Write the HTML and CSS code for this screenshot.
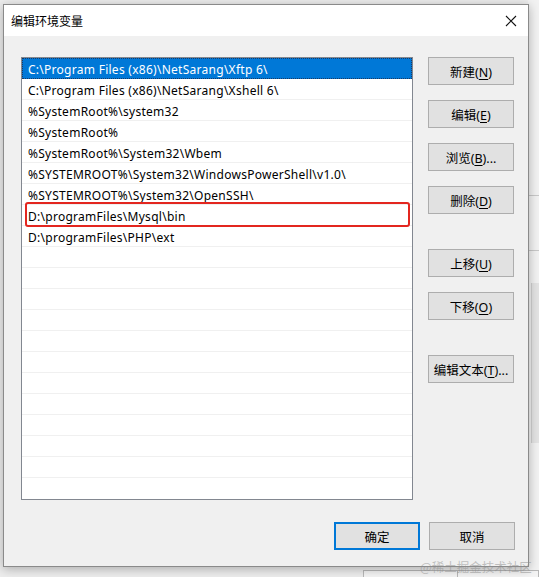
FILE: index.html
```html
<!DOCTYPE html>
<html lang="zh-CN">
<head>
<meta charset="utf-8">
<title>编辑环境变量</title>
<link rel="stylesheet" href="styles.css">
</head>
<body>
<div class="desktop">
  <div class="backdrop-right">
    <div class="bd-line l1"></div>
    <div class="bd-line l2"></div>
    <div class="bd-scroll"></div>
  </div>
  <div class="dialog">
    <div class="titlebar">
      <span class="title">编辑环境变量</span>
      <svg class="close" width="12" height="12" viewBox="0 0 12 12"><path d="M1 1 L11 11 M11 1 L1 11" stroke="#111" stroke-width="1.1" fill="none"/></svg>
    </div>
    <div class="body">
      <div class="main">
        <div class="listbox">
          <div class="row selected">C:\Program Files (x86)\NetSarang\Xftp 6\</div>
          <div class="row">C:\Program Files (x86)\NetSarang\Xshell 6\</div>
          <div class="row">%SystemRoot%\system32</div>
          <div class="row">%SystemRoot%</div>
          <div class="row">%SystemRoot%\System32\Wbem</div>
          <div class="row">%SYSTEMROOT%\System32\WindowsPowerShell\v1.0\</div>
          <div class="row">%SYSTEMROOT%\System32\OpenSSH\</div>
          <div class="row">D:\programFiles\Mysql\bin</div>
          <div class="row">D:\programFiles\PHP\ext</div>
          <div class="row"></div>
          <div class="row"></div>
          <div class="row"></div>
          <div class="row"></div>
          <div class="row"></div>
          <div class="row"></div>
          <div class="row"></div>
          <div class="row"></div>
          <div class="row"></div>
          <div class="row"></div>
          <div class="row"></div>
          <div class="row last"></div>
          <div class="highlight"></div>
        </div>
        <div class="side">
          <button class="btn">新建(<u>N</u>)</button>
          <button class="btn">编辑(<u>E</u>)</button>
          <button class="btn">浏览(<u>B</u>)...</button>
          <button class="btn">删除(<u>D</u>)</button>
          <button class="btn far">上移(<u>U</u>)</button>
          <button class="btn">下移(<u>O</u>)</button>
          <button class="btn far">编辑文本(<u>T</u>)...</button>
        </div>
      </div>
      <div class="footer">
        <button class="btn default">确定</button>
        <button class="btn">取消</button>
      </div>
    </div>
  </div>
  <div class="bottom-strip">
    <div class="bs-box b1"></div>
    <div class="bs-box b2"></div>
  </div>
  <span class="watermark">@稀土掘金技术社区</span>
</div>
</body>
</html>
```

FILE: styles.css
```css
html, body {
  margin: 0;
  padding: 0;
}
body {
  background: #f0f0f0;
  font-family: "Noto Sans", "Noto Sans CJK SC", sans-serif;
  font-size: 12px;
  color: #000;
}
.desktop {
  position: relative;
  width: 539px;
  height: 577px;
  overflow: hidden;
  background: #ededed;
}
.backdrop-right {
  position: absolute;
  left: 528px;
  top: 0;
  width: 11px;
  height: 577px;
  background: #f2f2f2;
}
.bd-line {
  position: absolute;
  left: 0;
  right: 0;
  height: 1px;
  background: #c8c8c8;
}
.l1 { top: 195px; }
.l2 { top: 250px; }
.bd-scroll {
  position: absolute;
  left: 3px;
  top: 283px;
  width: 8px;
  height: 160px;
  background: #e3e3e3;
  border-left: 1px solid #d0d0d0;
}
.dialog {
  position: relative;
  z-index: 1;
  margin: 4px 0 0 3px;
  width: 526px;
  height: 563px;
  box-sizing: border-box;
  border: 1px solid #8a8a8a;
  background: #f0f0f0;
  box-shadow: 0 2px 10px rgba(0, 0, 0, 0.28);
  display: flex;
  flex-direction: column;
}
.titlebar {
  height: 31px;
  flex: none;
  background: #fff;
  display: flex;
  align-items: center;
  justify-content: space-between;
  padding: 0 10px 0 7px;
}
.title {
  font-family: "Noto Sans CJK SC", sans-serif;
  font-size: 12px;
  color: #000;
}
.close {
  display: block;
  margin-right: 1px;
}
.body {
  flex: 1;
  display: flex;
  flex-direction: column;
  padding: 21px 13px 16px 17px;
}
.main {
  display: flex;
  gap: 15px;
  flex: 1;
}
.listbox {
  position: relative;
  width: 392px;
  height: 443px;
  box-sizing: border-box;
  border: 1px solid #828790;
  background: #fff;
  display: flex;
  flex-direction: column;
}
.row {
  height: 21px;
  flex: none;
  box-sizing: border-box;
  border-bottom: 1px solid #f0f0f0;
  padding: 1px 6px 0;
  line-height: 21px;
  white-space: nowrap;
  overflow: hidden;
  font-family: "Noto Sans", "Noto Sans CJK SC", sans-serif;
  font-size: 12px;
  letter-spacing: 0.27px;
  color: #000;
}
.row.last { border-bottom: none; }
.row.selected {
  background: #0078d7;
  color: #fff;
  border-bottom: none;
  outline: 1px dotted #1b3a63;
  outline-offset: -1px;
}
.highlight {
  position: absolute;
  left: 3px;
  top: 144px;
  width: 385px;
  height: 25px;
  box-sizing: border-box;
  border: 2.5px solid #e3261f;
  border-radius: 3px;
}
.side {
  display: flex;
  flex-direction: column;
  gap: 15px;
}
.btn {
  width: 86px;
  height: 28px;
  box-sizing: border-box;
  border: 1px solid #adadad;
  background: #e1e1e1;
  font-family: "Noto Sans", "Noto Sans CJK SC", sans-serif;
  font-size: 12.5px;
  color: #000;
  padding: 0;
  margin: 0;
  flex: none;
  white-space: nowrap;
}
.btn u {
  text-underline-offset: 2px;
}
.btn.far {
  margin-top: 20px;
}
.footer {
  display: flex;
  justify-content: flex-end;
  gap: 9px;
}
.btn.default {
  border: 2px solid #0078d7;
}
.bottom-strip {
  position: absolute;
  left: 0;
  top: 566px;
  width: 539px;
  height: 11px;
}
.bs-box {
  position: absolute;
  top: 4px;
  height: 12px;
  border: 1px solid #b8b8b8;
  background: #f4f4f4;
}
.b1 { left: 363px; width: 93px; }
.b2 { left: 457px; width: 80px; }
.watermark {
  position: absolute;
  z-index: 2;
  left: 420px;
  top: 559px;
  line-height: 16px;
  font-family: "Noto Sans CJK SC", sans-serif;
  font-size: 12.5px;
  color: rgba(140, 140, 140, 0.5);
  white-space: nowrap;
}
```
